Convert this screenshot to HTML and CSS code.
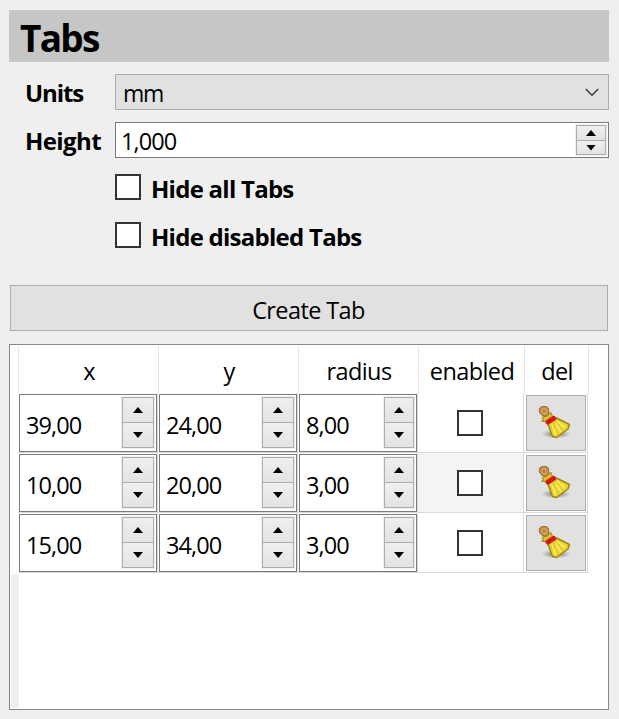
FILE: index.html
```
<!DOCTYPE html>
<html lang="en">
<head>
<meta charset="utf-8">
<title>Tabs</title>
<link rel="stylesheet" href="styles.css">
</head>
<body>
<svg class="defs" width="0" height="0">
  <defs>
    <radialGradient id="shade"><stop offset="0.3" stop-color="#666" stop-opacity=".65"/><stop offset="1" stop-color="#888" stop-opacity="0"/></radialGradient>
    <linearGradient id="straw" x1="0" y1="0" x2="1" y2="1"><stop offset="0" stop-color="#d2b91c"/><stop offset=".5" stop-color="#efdc3a"/><stop offset="1" stop-color="#d8bd18"/></linearGradient>
    <symbol id="broom" viewBox="0 0 36 36">
      <ellipse cx="18" cy="28" rx="15" ry="4.500" fill="url(#shade)"/>
      <path d="M6 9.500 13 6.500l1.500 4-6 5-5-.3 2.500-1.700-2-1z" fill="#d9bf2a" stroke="#a18712"/>
      <path d="M9.500 17 18.500 12 31.500 18.500l-1.500 4.500-11.500 8.500-4-1z" fill="url(#straw)" stroke="#a18712" stroke-width="1.500" stroke-linejoin="round"/>
      <path d="M13.500 18l4 11M17 17l6 9M19 15l8 7" fill="none" stroke="#fbf07c" stroke-width="1.100"/>
      <path d="M12.500 20l3 8M16 18.500l4 9M20 17l5 7" fill="none" stroke="#d9c126" stroke-width=".7"/>
      <path d="M10 16 15.500 12.500" stroke="#d9181b" stroke-width="5" stroke-linecap="round"/>
      <path d="M9.500 16 12.500 14.500" stroke="#b30d10" stroke-width="1"/>
      <path d="M3.500.8 8 .5 10.500 3 10.500 8 7.500 10.500 4 9 1.500 6 1.500 3z" fill="#cf9a58" stroke="#98713b" stroke-width="1.200"/>
      <circle cx="6" cy="5.300" r="2.300" fill="#c77d22" stroke="#e0ae70" stroke-width=".8"/>
    </symbol>
  </defs>
</svg>
<main class="panel">
  <h1 class="title">Tabs</h1>
  <form class="form">
    <label class="name units">Units</label>
    <div class="combo"><span>mm</span><svg width="14" height="9" viewBox="0 0 14 9"><path d="M.8 1 7 7.200 13.200 1" fill="none" stroke="#333" stroke-width="1.400"/></svg></div>
    <label class="name height">Height</label>
    <div class="spin wide"><span class="value">1,000</span><div class="steps"><i class="up"></i><i class="down"></i></div></div>
    <label class="check"><i class="box"></i><span class="all">Hide all Tabs</span></label>
    <label class="check"><i class="box"></i><span class="disabled">Hide disabled Tabs</span></label>
  </form>
  <div class="create"><span>Create Tab</span></div>
  <section class="table">
    <div class="rail"></div>
    <div class="content">
      <div class="row head"><div>x</div><div>y</div><div class="radius">radius</div><div class="enabled">enabled</div><div class="del">del</div></div>
      <div class="row">
        <div class="cell"><div class="spin"><span class="value">39,00</span><div class="steps"><i class="up"></i><i class="down"></i></div></div></div>
        <div class="cell"><div class="spin"><span class="value">24,00</span><div class="steps"><i class="up"></i><i class="down"></i></div></div></div>
        <div class="cell"><div class="spin narrow"><span class="value">8,00</span><div class="steps"><i class="up"></i><i class="down"></i></div></div></div>
        <div class="cell flag"><i class="box"></i></div>
        <div class="cell remove"><div class="button"><svg width="36" height="36"><use href="#broom"/></svg></div></div>
      </div>
      <div class="row alt">
        <div class="cell"><div class="spin"><span class="value">10,00</span><div class="steps"><i class="up"></i><i class="down"></i></div></div></div>
        <div class="cell"><div class="spin"><span class="value">20,00</span><div class="steps"><i class="up"></i><i class="down"></i></div></div></div>
        <div class="cell"><div class="spin narrow"><span class="value">3,00</span><div class="steps"><i class="up"></i><i class="down"></i></div></div></div>
        <div class="cell flag"><i class="box"></i></div>
        <div class="cell remove"><div class="button"><svg width="36" height="36"><use href="#broom"/></svg></div></div>
      </div>
      <div class="row">
        <div class="cell"><div class="spin"><span class="value">15,00</span><div class="steps"><i class="up"></i><i class="down"></i></div></div></div>
        <div class="cell"><div class="spin"><span class="value">34,00</span><div class="steps"><i class="up"></i><i class="down"></i></div></div></div>
        <div class="cell"><div class="spin narrow"><span class="value">3,00</span><div class="steps"><i class="up"></i><i class="down"></i></div></div></div>
        <div class="cell flag"><i class="box"></i></div>
        <div class="cell remove"><div class="button"><svg width="36" height="36"><use href="#broom"/></svg></div></div>
      </div>
    </div>
  </section>
</main>
</body>
</html>
```
FILE: styles.css
```
* { box-sizing: border-box; }
body { margin: 0; background: #efefef; color: #000; font: 23.5px/32px "Open Sans", "Noto Sans", sans-serif; letter-spacing: -0.6px; }
.defs { display: block; }
.panel { width: 619px; height: 719px; padding: 10px 10px 9px 9px; }
.title { margin: 0; height: 52px; padding: 1px 0 0 11px; background: #c6c6c6; font-size: 37px; line-height: 54px; letter-spacing: -1.7px; font-weight: 700; }
.form { display: grid; grid-template-columns: 106px 494px; grid-auto-rows: 36px; row-gap: 12px; padding-top: 12px; height: 223px; }
.name { padding: 3px 0 0 16px; font-size: 24px; font-weight: 700; letter-spacing: -0.7px; white-space: nowrap; }
.name.units { letter-spacing: -1.1px; }
.name.height { letter-spacing: -0.6px; }
.combo { display: flex; justify-content: space-between; align-items: center; border: 1px solid #adadad; background: #e1e1e1; padding: 2px 9px 0 7px; }
.combo span { font-size: 23px; letter-spacing: -1.2px; }
.combo svg { margin-top: -2px; }
.check { grid-column: 2; display: flex; gap: 10px; font-size: 24px; font-weight: 700; letter-spacing: -0.74px; white-space: nowrap; }
.check .box { margin-top: 4px; }
.check span { margin-top: 3px; }
.box { flex: none; width: 26px; height: 26px; border: 2px solid #333; background: #fff; }
.spin { display: flex; justify-content: space-between; align-items: center; height: 58px; border: 1px solid #7a7a7a; background: #fff; padding: 1px; }
.spin.wide { height: 36px; }
.value { padding: 3px 0 0 5px; letter-spacing: -0.9px; white-space: nowrap; }
.wide .value { padding: 2px 0 0 4px; }
.steps { align-self: flex-start; display: flex; flex-direction: column; width: 34px; height: 53px; border: 1px solid #f0f0f0; }
.narrow .steps { width: 32px; }
.wide .steps { width: 32px; height: 32px; }
.steps i { flex: 1; display: flex; align-items: center; justify-content: center; border: 1px solid #adadad; background: linear-gradient(#efefef, #e3e3e3); }
.steps .down { flex: 0 0 25px; border-top: 0; }
.wide .steps .down { flex-basis: 14px; }
.steps i::before { content: ""; width: 10px; height: 6px; background: #000; }
.up::before { clip-path: polygon(50% 0, 100% 100%, 0 100%); }
.down::before { clip-path: polygon(0 0, 100% 0, 50% 100%); }
.create { display: flex; justify-content: center; height: 46px; margin: 0 1px; padding-top: 8px; background: #e1e1e1; border: 1px solid #adadad; }
.create span { margin-right: 1px; }
.table { display: flex; height: 366px; margin-top: 13px; border: 1px solid #828790; background: #fff; padding: 1px; }
.rail { width: 8px; height: 134px; align-self: flex-end; background: #efefef; margin-right: -1px; }
.row { display: grid; grid-template-columns: 140px 140px 120px 106px 64px; height: 60px; }
.row.head { height: 47px; border-left: 1px solid #e5e5e5; width: 571px; }
.head > div { border-right: 1px solid #e5e5e5; text-align: center; padding: 9px 0 0 1px; }
.cell { border-right: 1px solid #d9d9d9; border-bottom: 1px solid #d9d9d9; padding: 1px 0 0 1px; }
.alt .flag { background: #f4f4f4; }
.flag { display: flex; justify-content: center; align-items: center; padding: 0 2px 0 0; }
.remove { padding: 2px 1px 1px 2px; }
.button { height: 56px; border: 1px solid #adadad; background: #e1e1e1; padding: 10px 0 0 11px; }
.button svg { display: block; }
```
